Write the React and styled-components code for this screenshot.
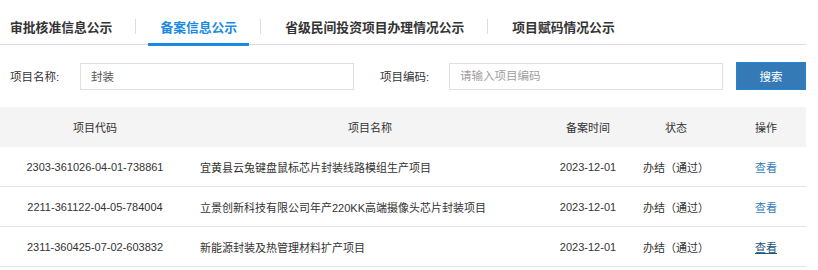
import React from "react";
import styled, { createGlobalStyle } from "styled-components";

const GlobalStyle = createGlobalStyle`
  body {
    margin: 0;
    background: #ffffff;
    font-family: "Liberation Sans", "Noto Sans CJK SC", sans-serif;
    color: #333333;
  }
`;

const tabs = ["审批核准信息公示", "备案信息公示", "省级民间投资项目办理情况公示", "项目赋码情况公示"];

const rows = [
    { code: "2303-361026-04-01-738861", name: "宜黄县云兔键盘鼠标芯片封装线路模组生产项目", date: "2023-12-01", status: "办结（通过）" },
    { code: "2211-361122-04-05-784004", name: "立景创新科技有限公司年产220KK高端摄像头芯片封装项目", date: "2023-12-01", status: "办结（通过）" },
    { code: "2311-360425-07-02-603832", name: "新能源封装及热管理材料扩产项目", date: "2023-12-01", status: "办结（通过）", hover: true },
];

const columns = [
    { title: "项目代码", width: 190 },
    { title: "项目名称", width: 360 },
    { title: "备案时间", width: 76 },
    { title: "状态", width: 100 },
    { title: "操作", width: 80 },
];

export default function App() {
    return (
        <>
            <GlobalStyle />
            <Page>
                <TabBar>
                    {tabs.map((t, i) => (
                        <React.Fragment key={t}>
                            {i > 0 && <Divider />}
                            <Tab $active={i === 1} $first={i === 0}>{t}</Tab>
                        </React.Fragment>
                    ))}
                </TabBar>

                <SearchRow>
                    <Label>项目名称:</Label>
                    <Input defaultValue="封装" />
                    <Label $second>项目编码:</Label>
                    <Input placeholder="请输入项目编码" />
                    <SearchBtn>搜索</SearchBtn>
                </SearchRow>

                <Table>
                    <colgroup>
                        {columns.map((c) => <col key={c.title} style={{ width: c.width }} />)}
                    </colgroup>
                    <thead>
                        <tr>
                            {columns.map((c) => <Th key={c.title}>{c.title}</Th>)}
                        </tr>
                    </thead>
                    <tbody>
                        {rows.map((r) => (
                            <tr key={r.code}>
                                <Td>{r.code}</Td>
                                <Td $left>{r.name}</Td>
                                <Td>{r.date}</Td>
                                <Td>{r.status}</Td>
                                <Td><ViewLink $hover={r.hover}>查看</ViewLink></Td>
                            </tr>
                        ))}
                    </tbody>
                </Table>
            </Page>
        </>
    );
}

const Page = styled.div`
width: 806px;
`;

const TabBar = styled.div`
display: flex;
align-items: center;
height: 45px;
box-sizing: border-box;
border-bottom: 1px solid #dddddd;
`;

const Tab = styled.div`
position: relative;
height: 44px;
box-sizing: border-box;
padding: 19px 12px 0 ${(p) => (p.$first ? "10px" : "12px")};
line-height: 17px;
font-size: 12.8px;
font-weight: 700;
white-space: nowrap;
color: ${(p) => (p.$active ? "#1a8be0" : "#333333")};
&::after {
  content: "";
  display: ${(p) => (p.$active ? "block" : "none")};
  position: absolute;
  left: 0;
  right: 0;
  bottom: -2px;
  height: 3px;
  background: #1a8be0;
}
`;

const Divider = styled.span`
width: 1px;
height: 15px;
margin: 9px 12px 0 11px;
background: #dddddd;
`;

const SearchRow = styled.div`
display: flex;
align-items: center;
margin-top: 17px;
height: 28px;
`;

const Label = styled.label`
flex: none;
width: ${(p) => (p.$second ? "69px" : "80px")};
margin-left: ${(p) => (p.$second ? "26px" : "0")};
padding-left: ${(p) => (p.$second ? "0" : "10px")};
box-sizing: border-box;
font-size: 11.5px;
color: #333333;
white-space: nowrap;
`;

const Input = styled.input`
flex: none;
width: 274px;
height: 27px;
box-sizing: border-box;
border: 1px solid #e0e0e0;
padding: 0 10px;
font-family: "Liberation Sans", "Noto Sans CJK SC", sans-serif;
font-size: 11.5px;
color: #555555;
outline: none;
&::placeholder {
  color: #a0a0a0;
}
`;

const SearchBtn = styled.button`
flex: none;
margin-left: 13px;
width: 70px;
height: 28px;
border: 1px solid #1f86d4;
background: #337ab7;
color: #ffffff;
font-family: "Liberation Sans", "Noto Sans CJK SC", sans-serif;
font-size: 11.5px;
padding: 0;
cursor: pointer;
`;

const Table = styled.table`
margin-top: 17px;
width: 806px;
border-collapse: collapse;
table-layout: fixed;
font-size: 11px;
color: #333333;
`;

const Th = styled.th`
height: 40px;
padding: 0;
background: #f4f4f4;
font-weight: 400;
text-align: center;
`;

const Td = styled.td`
height: 39px;
padding: 0 0 0 ${(p) => (p.$left ? "10px" : "0")};
border-bottom: 1px solid #e4e4e4;
text-align: ${(p) => (p.$left ? "left" : "center")};
white-space: nowrap;
`;

const ViewLink = styled.a`
color: ${(p) => (p.$hover ? "#23527c" : "#337ab7")};
text-decoration: ${(p) => (p.$hover ? "underline" : "none")};
cursor: pointer;
`;
